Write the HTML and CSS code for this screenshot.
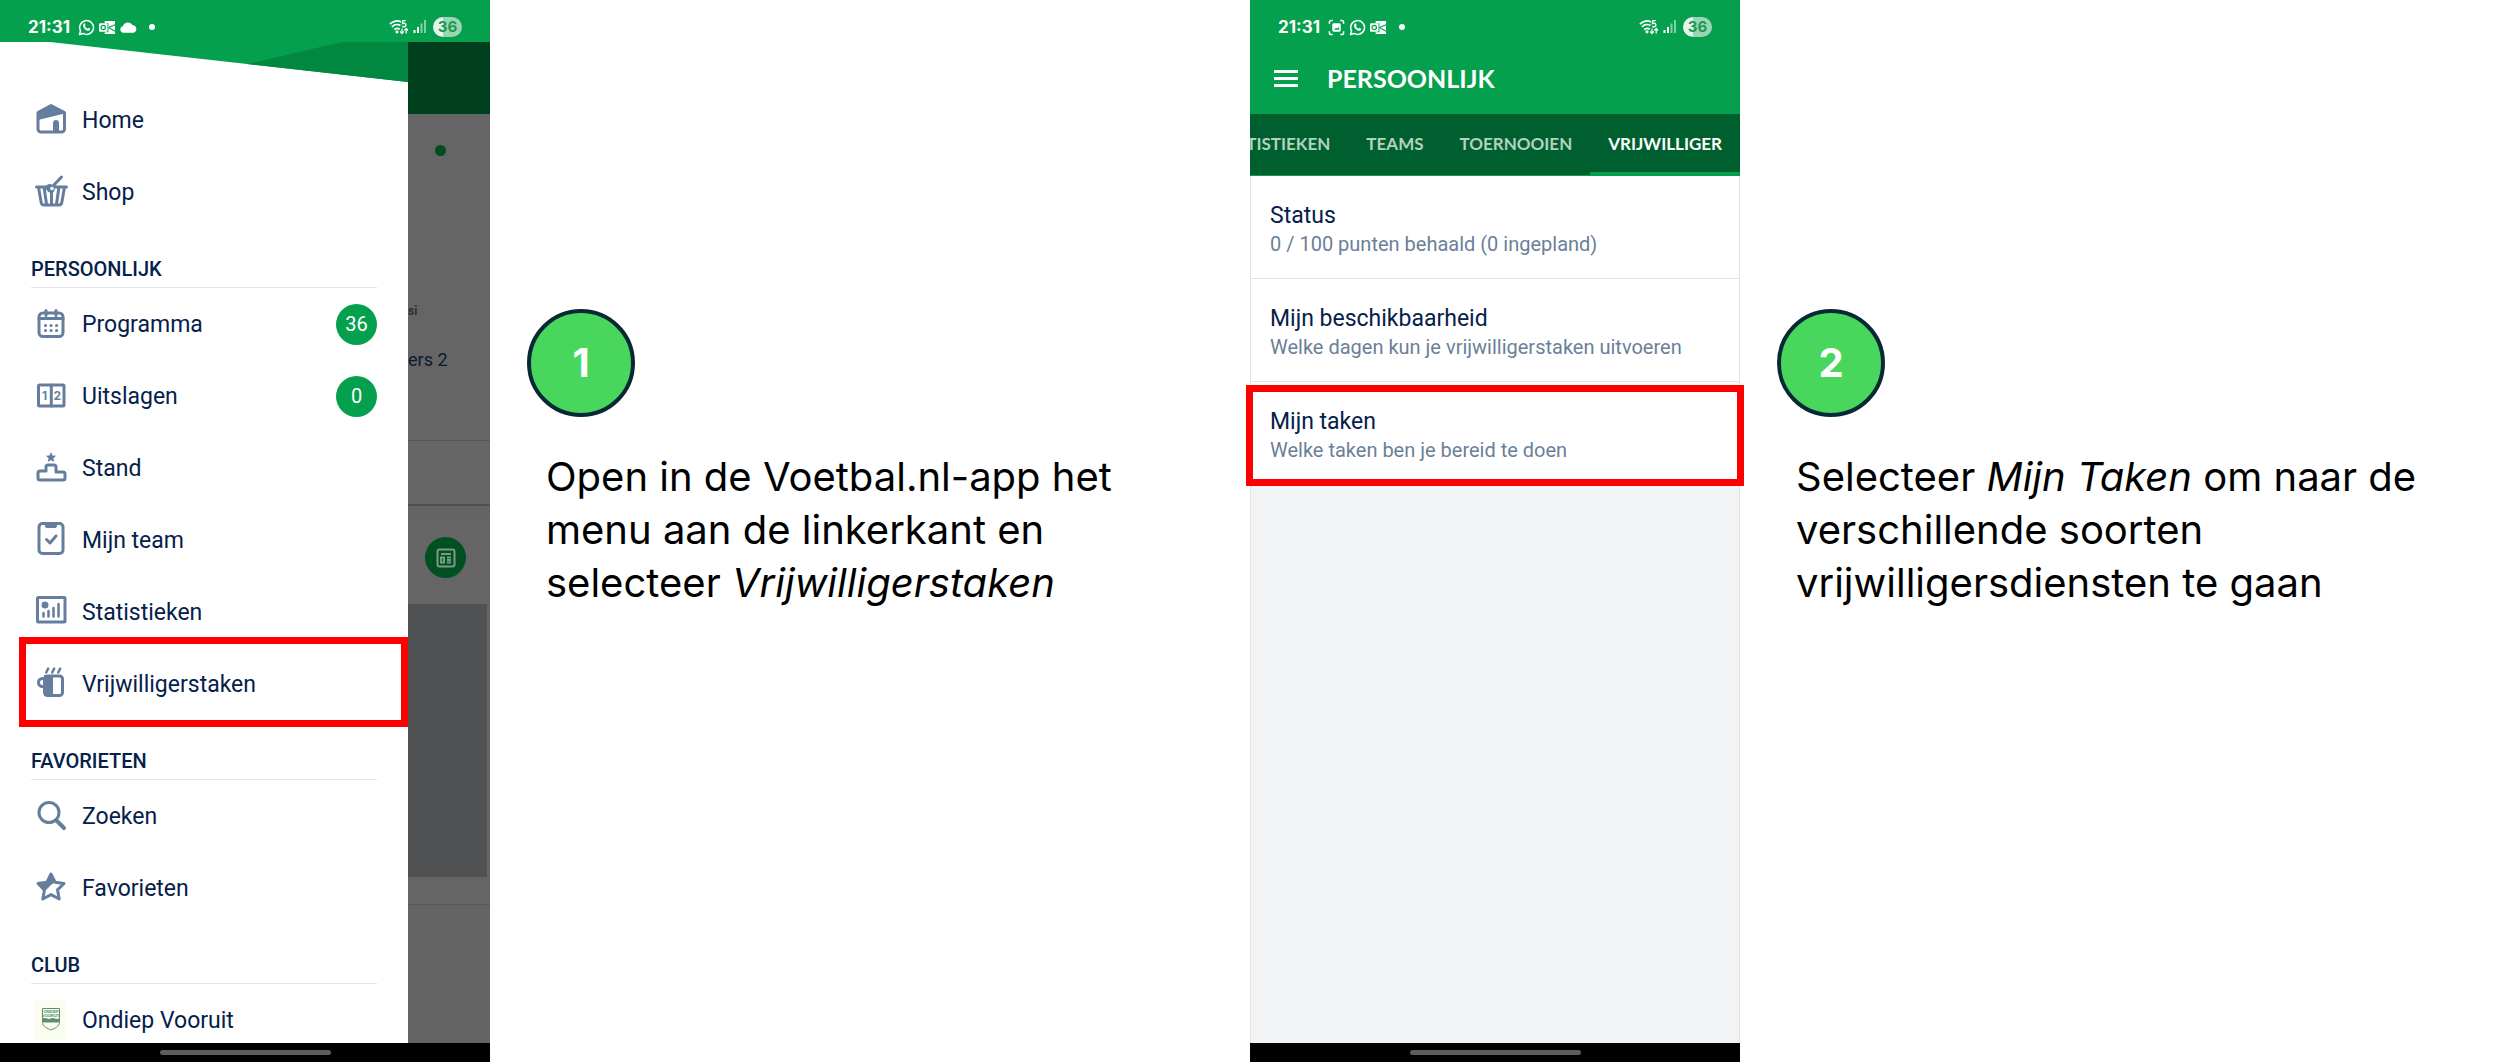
FILE: index.html
```html
<!doctype html>
<html lang="nl">
  <head>
    <meta charset="UTF-8">
    <meta name="viewport" content="width=device-width, initial-scale=1.0">
    <title>Vrijwilligerstaken in de Voetbal.nl-app</title>
    <link rel="stylesheet" href="styles.css">
  </head>
  <body>
    <!-- shared icons -->
    <svg class="sprite" aria-hidden="true">
      <symbol id="whatsapp" viewBox="0 0 18 18">
        <path d="M1.6 16.4l1.1-3.9A7.3 7.3 0 1 1 5.4 15.3z" fill="none" stroke="currentColor" stroke-width="1.6" stroke-linejoin="round"/>
        <path d="M6.2 4.8c.6-.5 1-.3 1.2.2l.6 1.4c.1.4-.6 1-.6 1.3.6 1.2 1.5 2 2.7 2.5.4 0 .8-.9 1.2-.8l1.5.8c.4.2.4.7 0 1.3-1.4 1.7-3.5.9-5.2-.4C5.7 9.5 4.4 6.6 6.2 4.8z" fill="currentColor"/>
      </symbol>
      <symbol id="outlook" viewBox="0 0 18 18">
        <path d="M6 2h11v14H6v-2h4V4.5H6z" fill="currentColor"/>
        <path d="M10 9l7-3M10 9l7 4" stroke="#04a04e" stroke-width="1.2"/>
        <rect x="0" y="4.5" width="9" height="9" rx="1" fill="currentColor"/>
        <circle cx="4.5" cy="9" r="2.3" fill="none" stroke="#04a04e" stroke-width="1.3"/>
      </symbol>
      <symbol id="cloud" viewBox="0 0 18 18">
        <path d="M3.5 14.5a3.4 3.4 0 0 1-.5-6.700A5.600 5.600 0 0 1 13.400 6.700a4 4 0 0 1 1.100 7.800z" fill="currentColor"/>
      </symbol>
      <symbol id="capture" viewBox="0 0 18 18">
        <path d="M1.5 5V3.500a2 2 0 0 1 2-2H5M13 1.500h1.500a2 2 0 0 1 2 2V5M16.500 13v1.500a2 2 0 0 1-2 2H13M5 16.500H3.500a2 2 0 0 1-2-2V13" fill="none" stroke="currentColor" stroke-width="1.6"/>
        <path fill-rule="evenodd" d="M6 4.500h6a1.500 1.500 0 0 1 1.500 1.500v6a1.500 1.500 0 0 1-1.500 1.500H6A1.500 1.500 0 0 1 4.500 12V6A1.500 1.500 0 0 1 6 4.500zM6.200 11.500h5.600v-3l-2 1.500-1.200-.8z" fill="currentColor"/>
      </symbol>
      <symbol id="wifi" viewBox="0 0 20 18">
        <path d="M1 6.200C4 2.600 9 2.200 12 4M3 9c2.400-2.700 6-2.900 8.400-1.400M5.300 11.600c1.500-1.600 4-1.600 5.400-.2" fill="none" stroke="currentColor" stroke-width="1.8"/>
        <circle cx="8" cy="13.800" r="1.600" fill="currentColor"/>
        <path d="M16.800 2.600h-3l-.3 3c2-.8 3.400 0 3.400 1.500s-1.800 2.200-3.600 1.200" fill="none" stroke="currentColor" stroke-width="1.4"/>
        <path d="M13 10.500v5M11.200 13.500l1.800 2 1.800-2M17.200 15.500v-5M15.400 12.500l1.800-2 1.800 2" fill="none" stroke="currentColor" stroke-width="1.2"/>
      </symbol>
      <symbol id="signal" viewBox="0 0 14 18">
        <path d="M1.500 12v3M5 9v6" stroke="currentColor" stroke-width="2"/>
        <path d="M8.500 5.500V15M12 2v13" stroke="currentColor" stroke-width="2" opacity=".5"/>
      </symbol>
    </svg>

    <main class="steps">
      <section class="step">
        <div class="phone">
          <div class="status-bar">
            <span class="time">21:31</span>
            <svg class="status-icon"><use href="#whatsapp"/></svg>
            <svg class="status-icon"><use href="#outlook"/></svg>
            <svg class="status-icon"><use href="#cloud"/></svg>
            <span class="more-dot"></span>
            <svg class="wifi-icon"><use href="#wifi"/></svg>
            <svg class="signal-icon"><use href="#signal"/></svg>
            <span class="battery">36</span>
          </div>

          <div class="screen">
            <nav class="drawer">
              <svg class="drawer-top" viewBox="0 0 408 42" preserveAspectRatio="none" aria-hidden="true">
                <path d="M50 0h358v40z" fill="#04a04e"/>
                <path d="M247 22L342 0h66v40z" fill="#008840"/>
              </svg>

              <a class="item" href="#">
                <svg class="icon" viewBox="0 0 40 40">
                  <path d="M7 12.500L20 5.500l13.500 7V29a3 3 0 0 1-3 3H10a3 3 0 0 1-3-3z" class="line"/>
                  <path d="M7 20v-8L20 5l13.500 7.500v1z"/>
                  <path d="M22 32v-9a3 3 0 0 1 6 0v9z"/>
                </svg>
                <span class="label">Home</span>
              </a>
              <a class="item" href="#">
                <svg class="icon" viewBox="0 0 40 40">
                  <path d="M5.500 15h30M7.500 15l2.700 15.500a3 3 0 0 0 3 2.500h14.600a3 3 0 0 0 3-2.500L33.500 15M13 15l2.500 17M28 15l-2.500 17M20.500 20v12M23 13l7.500-8" class="line"/>
                  <path d="M14 16c1-4 5-5 8-3 3 2 2 7-1 8-3 0-5-2-7-5z"/>
                  <circle cx="21" cy="16.500" r="1.800" fill="#fff"/>
                </svg>
                <span class="label">Shop</span>
              </a>

              <h2 class="group">PERSOONLIJK</h2>
              <a class="item" href="#">
                <svg class="icon" viewBox="0 0 40 40">
                  <rect x="8" y="9" width="24" height="23.500" rx="4" class="line"/>
                  <path d="M8 14.500h24" class="line"/>
                  <path d="M15 6.500v5M25 6.500v5" class="line"/>
                  <path d="M14.500 21.500h.1M20 21.500h.1M25.500 21.500h.1M14.500 26.500h.1M20 26.500h.1M25.500 26.500h.1" class="line"/>
                </svg>
                <span class="label">Programma</span>
                <span class="badge">36</span>
              </a>
              <a class="item" href="#">
                <svg class="icon" viewBox="0 0 40 40">
                  <rect x="7.500" y="9" width="25.500" height="21" rx="1" class="line"/>
                  <path d="M20.300 9v21" class="line"/>
                  <text x="11" y="24" class="digit">1</text>
                  <text x="22.500" y="24" class="digit">2</text>
                </svg>
                <span class="label">Uitslagen</span>
                <span class="badge">0</span>
              </a>
              <a class="item" href="#">
                <svg class="icon" viewBox="0 0 40 40">
                  <path d="M20 4l1.500 3.400 3.700.4-2.800 2.400.9 3.700-3.300-1.900-3.300 1.900.9-3.700-2.800-2.400 3.700-.4z"/>
                  <path d="M15 23v-4a2 2 0 0 1 2-2h6a2 2 0 0 1 2 2v5h7a2 2 0 0 1 2 2v4a2 2 0 0 1-2 2H9a2 2 0 0 1-2-2v-5a2 2 0 0 1 2-2z" class="line"/>
                </svg>
                <span class="label">Stand</span>
              </a>
              <a class="item" href="#">
                <svg class="icon" viewBox="0 0 40 40">
                  <rect x="8" y="3.500" width="24" height="30" rx="3.500" class="line"/>
                  <path d="M14 3h12v3a2 2 0 0 1-2 2h-8a2 2 0 0 1-2-2z"/>
                  <path d="M15.500 19.500l3.500 3.500 6-7" class="line"/>
                </svg>
                <span class="label">Mijn team</span>
              </a>
              <a class="item" href="#">
                <svg class="icon" viewBox="0 0 40 40">
                  <rect x="6.500" y="5.500" width="27.500" height="24.500" rx="1" class="line"/>
                  <circle cx="14" cy="13" r="3.500"/>
                  <path d="M12.500 21v3.500M17.500 19v5.500M22.500 16v8.500M27.500 12v12.500" class="line thin"/>
                </svg>
                <span class="label">Statistieken</span>
              </a>
              <a class="item highlight" href="#">
                <svg class="icon" viewBox="0 0 40 40">
                  <rect x="13.500" y="12" width="18" height="19.500" rx="3" class="line"/>
                  <path d="M13 11h9v21h-9z"/>
                  <path d="M12.500 14.500h-1a4 4 0 0 0-4 4v0a4 4 0 0 0 4 4h1" class="line"/>
                  <path d="M17.200 4.500l-2 4M23.200 4.500l-2 4M29.200 4.500l-2 4" class="line thin"/>
                </svg>
                <span class="label">Vrijwilligerstaken</span>
              </a>

              <h2 class="group">FAVORIETEN</h2>
              <a class="item" href="#">
                <svg class="icon" viewBox="0 0 40 40">
                  <circle cx="18" cy="16.500" r="10" class="line"/>
                  <path d="M25.500 24.500l7.500 7.500" class="line thick"/>
                </svg>
                <span class="label">Zoeken</span>
              </a>
              <a class="item" href="#">
                <svg class="icon" viewBox="0 0 40 40">
                  <path d="M20 6l4 8.200 9 1.300-6.500 6.300 1.700 9.200-8.200-4.300-8.200 4.300 1.700-9.200L7 15.500l9-1.300z" class="line"/>
                  <path d="M20 5l4.500 9.200-4 2.300-7.500 7.500L6 15.500l10-1.300z"/>
                </svg>
                <span class="label">Favorieten</span>
              </a>

              <h2 class="group">CLUB</h2>
              <a class="item" href="#">
                <svg class="icon" viewBox="0 0 40 40">
                  <rect x="4" y="0" width="32" height="40" fill="#fafdf0"/>
                  <path d="M11.500 8.500h17v14c0 4-5 6-8.500 7.500-3.500-1.500-8.500-3.500-8.500-7.500z" fill="none" stroke="#5f8f73" stroke-width="1"/>
                  <path d="M12 18.500c3-1.500 5 1.500 8 0s5 1.500 8 0v4H12z" fill="#5f8f73"/>
                  <text x="20" y="13" class="crest">ONDIEP</text>
                  <text x="20" y="17" class="crest">VOORUIT</text>
                </svg>
                <span class="label">Ondiep Vooruit</span>
              </a>
            </nav>

            <div class="behind">
              <div class="behind-header"></div>
              <div class="behind-card match">
                <span class="page-dot"></span>
                <span class="tiny">si</span>
                <span class="team">ers 2</span>
              </div>
              <div class="behind-card row"></div>
              <div class="behind-card news">
                <button class="news-btn" type="button" aria-label="Nieuws">
                  <svg viewBox="0 0 20 20">
                    <rect x="1.500" y="1.500" width="17" height="17" rx="2"/>
                    <path d="M5 6h10M11 9.500h4M11 12h4M11 14.500h4M5 9.500h3v5H5z"/>
                  </svg>
                </button>
                <div class="photo"></div>
              </div>
            </div>
          </div>

          <div class="home-bar"><span></span></div>
        </div>

        <div class="explain">
          <div class="number">1</div>
          <p>Open in de Voetbal.nl-app het menu aan de linkerkant en selecteer <em>Vrijwilligerstaken</em></p>
        </div>
      </section>

      <section class="step">
        <div class="phone">
          <div class="status-bar">
            <span class="time">21:31</span>
            <svg class="status-icon"><use href="#capture"/></svg>
            <svg class="status-icon"><use href="#whatsapp"/></svg>
            <svg class="status-icon"><use href="#outlook"/></svg>
            <span class="more-dot"></span>
            <svg class="wifi-icon"><use href="#wifi"/></svg>
            <svg class="signal-icon"><use href="#signal"/></svg>
            <span class="battery">36</span>
          </div>

          <header class="app-header">
            <button class="menu-btn" type="button" aria-label="Menu"><span></span><span></span><span></span></button>
            <h1>PERSOONLIJK</h1>
          </header>
          <nav class="tabs">
            <a href="#">STATISTIEKEN</a>
            <a href="#">TEAMS</a>
            <a href="#">TOERNOOIEN</a>
            <a href="#" class="active">VRIJWILLIGER</a>
          </nav>

          <div class="settings">
            <a class="setting" href="#">
              <strong>Status</strong>
              <span>0 / 100 punten behaald (0 ingepland)</span>
            </a>
            <a class="setting" href="#">
              <strong>Mijn beschikbaarheid</strong>
              <span>Welke dagen kun je vrijwilligerstaken uitvoeren</span>
            </a>
            <a class="setting highlight" href="#">
              <strong>Mijn taken</strong>
              <span>Welke taken ben je bereid te doen</span>
            </a>
          </div>

          <div class="home-bar"><span></span></div>
        </div>

        <div class="explain">
          <div class="number">2</div>
          <p>Selecteer <em>Mijn Taken</em> om naar de verschillende soorten vrijwilligersdiensten te gaan</p>
        </div>
      </section>
    </main>
  </body>
</html>
```
FILE: styles.css
```css
* {
  box-sizing: border-box;
}

body {
  margin: 0;
  background: #fff;
  color: #000;
  font-family: Roboto, "Liberation Sans", sans-serif;
}

a {
  color: inherit;
  text-decoration: none;
}

.sprite {
  display: none;
}

.steps {
  display: grid;
  grid-template-columns: 1fr 1fr;
  height: 100vh;
}

.step {
  display: grid;
  grid-template-columns: minmax(0, 49fr) minmax(0, 76fr);
  min-height: 0;
}

/* phone */
.phone {
  display: flex;
  flex-direction: column;
  min-height: 0;
}

.status-bar {
  display: flex;
  align-items: center;
  gap: 4px;
  flex: none;
  height: 42px;
  padding: 12px 28px 0;
  background: #04a04e;
  color: #fff;
}

.time {
  margin-right: 4px;
  font: 700 17px/20px Inter, sans-serif;
}

.status-icon {
  width: 17px;
  height: 17px;
}

.more-dot {
  width: 6px;
  height: 6px;
  margin: 0 auto 0 8px;
  border-radius: 50%;
  background: #fff;
}

.wifi-icon {
  width: 20px;
  height: 18px;
}

.signal-icon {
  width: 14px;
  height: 18px;
}

.battery {
  width: 29px;
  margin-left: 2px;
  border-radius: 10px;
  background: linear-gradient(90deg, #e6f5ec 36%, #9bd6b4 36%);
  color: #1d9a55;
  font: 700 15px/20px Inter, sans-serif;
  text-align: center;
}

.home-bar {
  display: flex;
  justify-content: center;
  align-items: center;
  flex: none;
  height: 19px;
  background: #000;
}

.home-bar span {
  width: 171px;
  height: 5px;
  border-radius: 3px;
  background: #5c5c5c;
}

/* screen with open drawer */
.screen {
  display: flex;
  flex: 1;
  min-height: 0;
}

.drawer {
  flex: 0 1 408px;
  background: #fff;
  color: #05204a;
  overflow: hidden;
}

.drawer-top {
  display: block;
  width: 100%;
  height: 42px;
}

.item {
  position: relative;
  display: flex;
  align-items: center;
  height: 72px;
  padding: 0 31px;
}

.icon {
  width: 40px;
  height: 40px;
  margin-right: 11px;
  fill: #667e9e;
}

.icon .line {
  fill: none;
  stroke: #667e9e;
  stroke-width: 3;
  stroke-linecap: round;
  stroke-linejoin: round;
}

.icon .thin {
  stroke-width: 2.5;
}

.icon .thick {
  stroke-width: 4;
}

.digit {
  font: 700 12px Inter, sans-serif;
}

.crest {
  fill: #5f8f73;
  font: 700 4px Inter, sans-serif;
  text-anchor: middle;
}

.label {
  padding-top: 2px;
  font-size: 23px;
  line-height: 28px;
}

.badge {
  width: 41px;
  height: 41px;
  margin-left: auto;
  border-radius: 50%;
  background: #04a04e;
  color: #fff;
  font-size: 20px;
  line-height: 41px;
  text-align: center;
}

.group {
  height: 60px;
  margin: 0 31px;
  padding-top: 27px;
  border-bottom: 1px solid #e3e6e9;
  font-size: 20px;
  font-weight: 500;
  line-height: 28px;
}

.highlight {
  position: relative;
}

.highlight::after {
  content: "";
  position: absolute;
  border: 7px solid #f00;
}

.item.highlight::after {
  inset: -11px 0 -7px 19px;
}

/* dimmed page behind the drawer */
.behind {
  display: flex;
  flex-direction: column;
  flex: 1;
  background: #646464;
  overflow: hidden;
}

.behind-header {
  height: 72px;
  background: #003f1c;
}

.behind-card {
  border-bottom: 1px solid #575757;
  background: #656565;
}

.match {
  display: flex;
  flex-direction: column;
  height: 327px;
  padding-top: 31px;
}

.page-dot {
  width: 11px;
  height: 11px;
  margin: 0 0 145px 27px;
  border-radius: 50%;
  background: #004c22;
}

.tiny {
  color: #2c2c2c;
  font-size: 12px;
  font-weight: 700;
  line-height: 20px;
}

.team {
  margin-top: 27px;
  color: #0c1a30;
  font-size: 18px;
  line-height: 24px;
}

.row {
  height: 65px;
  margin-bottom: 10px;
  border-bottom: 2px solid #4c5058;
}

.news {
  height: 389px;
  padding-top: 21px;
}

.news-btn {
  display: flex;
  align-items: center;
  justify-content: center;
  width: 41px;
  height: 41px;
  margin: 0 0 26px 17px;
  padding: 0;
  border: none;
  border-radius: 50%;
  background: #005022;
}

.news-btn svg {
  width: 20px;
  height: 20px;
  fill: none;
  stroke: #7d9a87;
  stroke-width: 2;
}

.photo {
  height: 273px;
  margin-right: 3px;
  background: #4f5152;
}

/* screen with the volunteer tab */
.app-header {
  display: flex;
  align-items: center;
  gap: 29px;
  flex: none;
  height: 72px;
  padding: 0 24px;
  background: #04a04e;
  color: #fff;
}

.app-header h1 {
  margin: 0;
  font: 700 25px/32px Lato, sans-serif;
}

.menu-btn {
  display: flex;
  flex-direction: column;
  gap: 4px;
  padding: 0;
  border: none;
  background: none;
}

.menu-btn span {
  width: 24px;
  height: 3px;
  background: #fff;
}

.tabs {
  display: flex;
  justify-content: flex-end;
  flex: none;
  height: 62px;
  border-bottom: 1px solid #04a04e;
  background: #005f2e;
  color: #b3d2bf;
  font: 700 17px/60px Lato, sans-serif;
  overflow: hidden;
}

.tabs a {
  padding: 0 18px;
}

.tabs .active {
  border-bottom: 3px solid #04a04e;
  color: #fff;
}

.settings {
  flex: 1;
  border: solid #e3e4e6;
  border-width: 0 1px;
  background: #f2f3f5;
}

.setting {
  display: flex;
  flex-direction: column;
  height: 103px;
  padding: 26px 19px 0;
  border-bottom: 1px solid #e3e4e6;
  background: #fff;
}

.setting strong {
  color: #05204a;
  font-size: 23px;
  font-weight: 400;
  line-height: 28px;
}

.setting span {
  color: #6b7f99;
  font-size: 20px;
  line-height: 28px;
}

.setting.highlight::after {
  inset: 3px -5px -2px;
}

/* explanation beside each phone */
.explain {
  padding: 309px 50px 0 37px;
}

.number {
  width: 108px;
  height: 108px;
  border: 4px solid #082836;
  border-radius: 50%;
  background: #48d65c;
  color: #fff;
  font: 700 40px/100px Inter, sans-serif;
  text-align: center;
}

.explain p {
  margin: 33px 0 0 19px;
  font: 40px/53px Inter, sans-serif;
}
```
